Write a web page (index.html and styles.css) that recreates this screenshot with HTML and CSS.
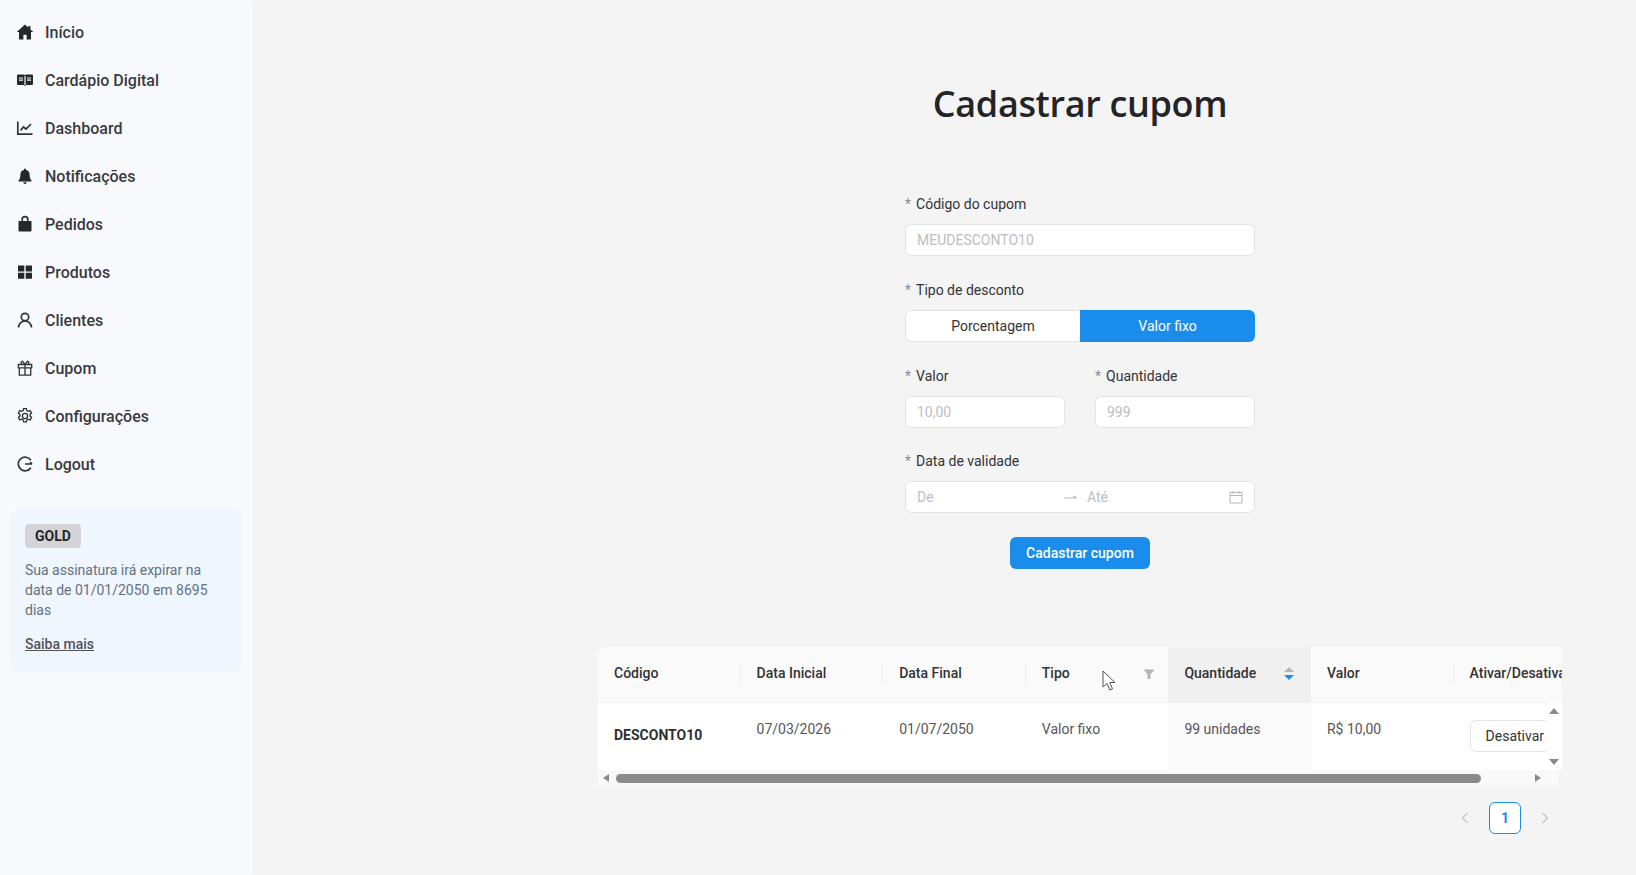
FILE: index.html
```html
<!DOCTYPE html>
<html lang="pt-BR">
<head>
  <meta charset="UTF-8" />
  <title>Cadastrar cupom</title>
  <meta name="viewport" content="width=device-width, initial-scale=1.0" />
  <link rel="stylesheet" href="styles.css">
</head>
<body>

  <aside class="sidebar">
    <nav class="nav">
      <a class="nav-item" href="#">
        <svg class="nav-icon" viewBox="0 0 16 16"><path class="fill" d="M8 .5 -.3 8h2.300v7.500h4.400v-4.800h3.200v4.800H14V8h2.300l-2.900-2.600V2h-2.200v1.400z"/></svg>
        Início
      </a>
      <a class="nav-item" href="#">
        <svg class="nav-icon" viewBox="0 0 16 16"><path class="fill" d="M1 2.500h5.600c.7 0 1.200.3 1.400.7.200-.4.700-.7 1.400-.7H15a1 1 0 0 1 1 1v8.600a1 1 0 0 1-1 1H9.200l-1.200.9-1.200-.9H1a1 1 0 0 1-1-1V3.500a1 1 0 0 1 1-1z"/><path class="cut" d="M2 6h4M2 8.200h4M10 6h4M10 8.200h4M8 4v9"/></svg>
        Cardápio Digital
      </a>
      <a class="nav-item" href="#">
        <svg class="nav-icon" viewBox="0 0 16 16"><path class="line" d="M.8 1.500v12.700h14.700M3.500 10.500 6.500 7l2.500 2 5-5"/></svg>
        Dashboard
      </a>
      <a class="nav-item" href="#">
        <svg class="nav-icon" viewBox="0 0 16 16"><path class="fill" d="M8 .5a1 1 0 0 1 1 1v.6a4.500 4.500 0 0 1 3.600 4.400c0 3.500 1 5 1.900 6v1h-13v-1c.9-1 1.900-2.500 1.900-6A4.500 4.500 0 0 1 7 2.100v-.6a1 1 0 0 1 1-1zM6.300 14.300h3.400a1.700 1.700 0 0 1-3.400 0z"/></svg>
        Notificações
      </a>
      <a class="nav-item" href="#">
        <svg class="nav-icon" viewBox="0 0 16 16"><path class="fill" d="M1.500 5h13v9.500a1 1 0 0 1-1 1h-11a1 1 0 0 1-1-1z"/><path class="line" d="M5.200 6V3.500a2.800 2.800 0 0 1 5.600 0V6"/></svg>
        Pedidos
      </a>
      <a class="nav-item" href="#">
        <svg class="nav-icon" viewBox="0 0 16 16"><path class="fill" d="M1 1.500h6.300v6H1zM8.700 1.500H15v6H8.700zM1 8.800h6.300v6H1zM8.700 8.800H15v6H8.700z"/></svg>
        Produtos
      </a>
      <a class="nav-item" href="#">
        <svg class="nav-icon" viewBox="0 0 16 16"><circle class="line" cx="8" cy="5" r="3.700"/><path class="line" d="M1.500 15.500c.2-3.800 3-6.500 6.500-6.500s6.300 2.700 6.500 6.500"/></svg>
        Clientes
      </a>
      <a class="nav-item" href="#">
        <svg class="nav-icon" viewBox="0 0 16 16"><path class="line thin" d="M1.300 4.500h13.400v3.300H1.300zM2.300 7.800v7.400h11.400V7.800M8 4.500v10.700M8 4.500 5.500 1.200 4 2.500l1 2M8 4.500l2.500-3.300L12 2.500l-1 2"/></svg>
        Cupom
      </a>
      <a class="nav-item" href="#">
        <svg class="nav-icon" viewBox="0 0 16 16"><circle class="line thin" cx="8" cy="8" r="2.600"/><path class="line thin" d="M6.600.6h2.800l.4 2 1.500.8 1.900-.8 1.400 2.500-1.500 1.300v1.700l1.500 1.300-1.400 2.500-1.900-.8-1.500.8-.4 2H6.600l-.4-2-1.500-.8-1.900.8-1.400-2.500 1.500-1.300V6.400L1.400 5.100l1.400-2.500 1.900.8 1.500-.8z"/></svg>
        Configurações
      </a>
      <a class="nav-item" href="#">
        <svg class="nav-icon" viewBox="0 0 16 16"><path class="line" d="M13.800 4.300a6.800 6.800 0 1 0 0 7.400M8 8h7.200M13.200 6.200 15 8"/></svg>
        Logout
      </a>
    </nav>

    <div class="plan-card">
      <span class="plan-badge">GOLD</span>
      <p class="plan-text">Sua assinatura irá expirar na data de 01/01/2050 em 8695 dias</p>
      <a class="plan-link" href="#">Saiba mais</a>
    </div>
  </aside>

  <main class="main">
    <div class="content">
      <h1 class="title">Cadastrar cupom</h1>

      <form class="form">
        <div class="form-item">
          <label class="form-label">Código do cupom</label>
          <input class="input" type="text" placeholder="MEUDESCONTO10">
        </div>

        <div class="form-item">
          <label class="form-label">Tipo de desconto</label>
          <div class="segment">
            <button type="button" class="segment-btn">Porcentagem</button>
            <button type="button" class="segment-btn is-active">Valor fixo</button>
          </div>
        </div>

        <div class="form-row">
          <div class="form-item">
            <label class="form-label">Valor</label>
            <input class="input" type="text" placeholder="10,00">
          </div>
          <div class="form-item">
            <label class="form-label">Quantidade</label>
            <input class="input" type="text" placeholder="999">
          </div>
        </div>

        <div class="form-item form-item-date">
          <label class="form-label">Data de validade</label>
          <div class="date-range">
            <span class="date-start">De</span>
            <svg class="date-arrow" viewBox="0 0 14 8"><path d="M0 5h12.500M9.500 3l3 2"/></svg>
            <span class="date-end">Até</span>
            <svg class="date-icon" viewBox="0 0 14 14"><path d="M1 2.500h12v10.500H1zM1 5.500h12M4 .8v3M10 .8v3"/></svg>
          </div>
        </div>

        <div class="form-submit">
          <button type="button" class="submit-btn">Cadastrar cupom</button>
        </div>
      </form>

      <div class="table-card">
        <table class="table">
          <thead>
            <tr>
              <th><span class="th-text">Código</span></th>
              <th><span class="th-text">Data Inicial</span></th>
              <th><span class="th-text">Data Final</span></th>
              <th>
                <span class="th-text">Tipo</span>
                <svg class="filter-icon" viewBox="0 0 12 12"><path d="M.5 1.500h11L7.500 6.500V11h-3V6.500z"/></svg>
              </th>
              <th class="is-sorted">
                <span class="th-text">Quantidade</span>
                <span class="sorter"><i class="sort-up"></i><i class="sort-down"></i></span>
              </th>
              <th><span class="th-text">Valor</span></th>
              <th class="th-action"><span class="th-text">Ativar/Desativar</span></th>
            </tr>
          </thead>
          <tbody>
            <tr>
              <td class="cell-code">DESCONTO10</td>
              <td>07/03/2026</td>
              <td>01/07/2050</td>
              <td>Valor fixo</td>
              <td class="is-sorted">99 unidades</td>
              <td>R$ 10,00</td>
              <td class="cell-action"><button type="button" class="row-btn">Desativar</button></td>
            </tr>
          </tbody>
        </table>

        <div class="vscroll">
          <i class="arrow-up"></i>
          <i class="arrow-down"></i>
        </div>

        <div class="hscroll">
          <i class="arrow-left"></i>
          <div class="hscroll-track"><div class="hscroll-thumb"></div></div>
          <i class="arrow-right"></i>
        </div>
      </div>

      <div class="pagination">
        <svg class="page-arrow" viewBox="0 0 8 12"><path d="M6.500 1 1.500 6l5 5"/></svg>
        <span class="page-num">1</span>
        <svg class="page-arrow" viewBox="0 0 8 12"><path d="M1.500 1l5 5-5 5"/></svg>
      </div>
    </div>

    <svg class="cursor" viewBox="0 0 14 22"><path d="M1 1v16l4-3.500 2.800 6.500 2.700-1.200-2.800-6.300H13z"/></svg>
  </main>

</body>
</html>
```

FILE: styles.css
```css
* {
  box-sizing: border-box;
}

html, body {
  height: 100%;
}

body {
  margin: 0;
  display: flex;
  overflow: hidden;
  font-family: Roboto, "Liberation Sans", sans-serif;
  font-size: 14px;
  color: #333336;
  background: #f4f4f5;
}

/* sidebar */
.sidebar {
  flex: 0 0 253px;
  padding: 8px 11px 0 10px;
  background: #f8f9fc;
  box-shadow: 1px 0 4px rgba(0, 0, 0, 0.02);
}

.nav {
  margin-bottom: 20px;
}

.nav-item {
  display: flex;
  align-items: center;
  gap: 12px;
  height: 48px;
  padding-left: 7px;
  font-size: 16px;
  font-weight: 500;
  color: #3a3a3f;
  text-decoration: none;
}

.nav-icon {
  flex: none;
  width: 16px;
  height: 16px;
  overflow: visible;

  .fill { fill: #27272a; }
  .cut { fill: none; stroke: #f8f9fc; stroke-width: 1.2; }
  .line { fill: none; stroke: #333336; stroke-width: 1.7; }
  .line.thin { stroke-width: 1.3; }
}

.plan-card {
  padding: 16px 15px 18px;
  border-radius: 10px;
  background: #eff6fe;
}

.plan-badge {
  display: block;
  width: 56px;
  height: 24px;
  border-radius: 4px;
  background: #d4d4d8;
  font-size: 14px;
  font-weight: 700;
  line-height: 24px;
  text-align: center;
  color: #27272a;
}

.plan-text {
  margin: 12px 0 14px;
  line-height: 20px;
  color: #64707f;
}

.plan-link {
  display: block;
  line-height: 20px;
  font-weight: 500;
  color: #52525b;
}

/* main */
.main {
  flex: 1;
  position: relative;
  padding: 81px 0 0 345px;
}

.content {
  width: 964px;
}

.title {
  margin: 0 0 66px;
  font-family: "Open Sans", sans-serif;
  font-size: 36px;
  font-weight: 600;
  letter-spacing: -0.35px;
  line-height: 46px;
  text-align: center;
  color: #242427;
}

.form {
  width: 350px;
  margin: 0 auto 78px;
}

.form-item {
  margin-bottom: 23px;
}

.form-label {
  display: block;
  height: 22px;
  margin-bottom: 9px;
  line-height: 22px;
  color: #333336;

  &::before {
    content: "*";
    margin-right: 5px;
    color: #8b8b90;
  }
}

.input,
.date-range {
  display: block;
  width: 100%;
  height: 32px;
  padding: 0 11px;
  border: 1px solid #e3e3e6;
  border-radius: 6px;
  background: #fff;
  font: inherit;
  color: #bdbdc2;
}

.input::placeholder {
  color: #bdbdc2;
  opacity: 1;
}

.segment {
  display: flex;
  height: 32px;
}

.segment-btn {
  flex: 0 0 175px;
  padding: 0;
  border: 1px solid #e3e3e6;
  border-right: 0;
  border-radius: 6px 0 0 6px;
  background: #fff;
  font: inherit;
  color: #333336;

  &.is-active {
    border: 0;
    border-radius: 0 6px 6px 0;
    background: #1a8cec;
    color: #fff;
  }
}

.form-row {
  display: flex;
  gap: 30px;

  .form-item {
    flex: 1;
    margin-bottom: 22px;
  }
}

.form-item-date {
  margin-bottom: 24px;
}

.date-range {
  display: flex;
  align-items: center;
}

.date-start {
  width: 147px;
}

.date-arrow {
  width: 14px;
  height: 8px;
  margin-right: 9px;
  fill: none;
  stroke: #b5b5ba;
  stroke-width: 1.2;
}

.date-end {
  flex: 1;
}

.date-icon {
  width: 14px;
  height: 14px;
  fill: none;
  stroke: #b5b5ba;
  stroke-width: 1;
}

.form-submit {
  display: flex;
  justify-content: center;
}

.submit-btn {
  width: 140px;
  height: 32px;
  padding: 0;
  border: 0;
  border-radius: 6px;
  background: #1a8cec;
  font: inherit;
  font-weight: 500;
  color: #fff;
}

/* table */
.table-card {
  position: relative;
  overflow: hidden;
  width: 964px;
  border-radius: 8px 0 0 0;
}

.table {
  width: 1030px;
  table-layout: fixed;
  border-collapse: collapse;

  th {
    position: relative;
    width: 142.6px;
    height: 55px;
    padding: 0 16px 2px;
    border-bottom: 1px solid #f0f0f0;
    font-weight: 500;
    text-align: left;
    white-space: nowrap;
    color: #333336;
    background: #fafafa;

    &::after {
      content: "";
      position: absolute;
      top: 17px;
      right: 0;
      width: 1px;
      height: 20px;
      background: #ededed;
    }

    &:nth-child(4)::after,
    &:nth-child(5)::after {
      display: none;
    }

    &.is-sorted {
      background: #f0f0f0;
    }

    &.th-action {
      width: 174.4px;
    }
  }

  td {
    height: 68px;
    padding: 15px 16px 0;
    vertical-align: top;
    line-height: 22px;
    color: #55555a;
    background: #fff;

    &.is-sorted {
      background: #fafafa;
    }
  }

  .cell-code {
    padding-top: 21px;
    font-weight: 700;
    color: #2f2f33;
  }

  .cell-action {
    padding-top: 17px;
  }
}

.filter-icon {
  position: absolute;
  top: 21px;
  right: 13px;
  width: 12px;
  height: 12px;
  fill: #b5b5b5;
}

.sorter {
  position: absolute;
  top: 20px;
  right: 17px;
  display: flex;
  flex-direction: column;
  gap: 3px;

  i {
    display: block;
    width: 0;
    height: 0;
    border-left: 5px solid transparent;
    border-right: 5px solid transparent;
  }

  .sort-up {
    border-bottom: 5px solid #b5b5b5;
  }

  .sort-down {
    border-top: 5px solid #1a8cec;
  }
}

.row-btn {
  width: 100px;
  height: 32px;
  padding: 0 15px;
  border: 1px solid #e3e3e6;
  border-radius: 6px;
  background: #fff;
  font: inherit;
  text-align: left;
  color: #333336;
}

.vscroll {
  position: absolute;
  top: 55px;
  right: 0;
  display: flex;
  flex-direction: column;
  justify-content: space-between;
  align-items: center;
  width: 16px;
  height: 68px;
  padding: 6px 0 5px;
  background: #fff;
}

.arrow-up,
.arrow-down {
  display: block;
  width: 0;
  height: 0;
  border-left: 5px solid transparent;
  border-right: 5px solid transparent;
}

.arrow-up {
  border-bottom: 6px solid #8a8a8a;
}

.arrow-down {
  border-top: 6px solid #8a8a8a;
}

.hscroll {
  display: flex;
  align-items: center;
  gap: 4px;
  width: 960px;
  height: 16px;
  padding: 0 17px 0 5px;
  background: #f9f9f9;
}

.arrow-left,
.arrow-right {
  flex: none;
  width: 0;
  height: 0;
  border-top: 4px solid transparent;
  border-bottom: 4px solid transparent;
}

.arrow-left {
  border-right: 6px solid #8a8a8a;
}

.arrow-right {
  border-left: 6px solid #8a8a8a;
}

.hscroll-track {
  flex: 1;
  padding-left: 3px;
}

.hscroll-thumb {
  width: 865px;
  height: 9px;
  border-radius: 5px;
  background: #8a8a8a;
}

/* pagination */
.pagination {
  display: flex;
  align-items: center;
  gap: 20px;
  width: 960px;
  margin-top: 16px;
  padding-right: 9px;
  justify-content: flex-end;
}

.page-arrow {
  width: 8px;
  height: 12px;
  fill: none;
  stroke: #c4c4c8;
  stroke-width: 1.2;
}

.page-num {
  width: 32px;
  height: 32px;
  border: 1px solid #1a8cec;
  border-radius: 6px;
  background: #fff;
  font-weight: 700;
  line-height: 30px;
  text-align: center;
  color: #1a8cec;
}

/* ponteiro do mouse na captura */
.cursor {
  position: absolute;
  top: 670px;
  left: 849px;
  width: 14px;
  height: 22px;
  fill: #fff;
  stroke: #55555a;
  stroke-width: 1;
}
```
